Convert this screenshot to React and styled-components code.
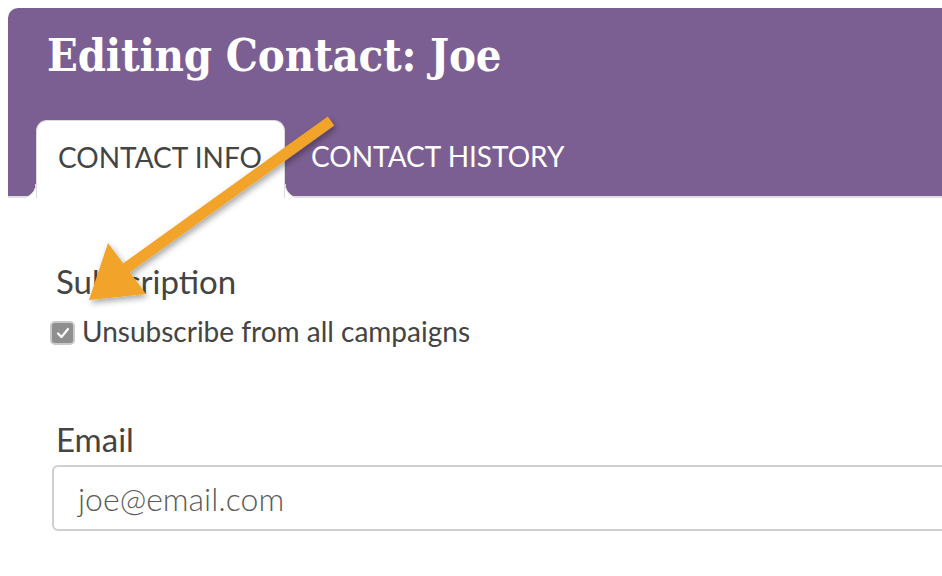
import React from "react";
import styled, { createGlobalStyle } from "styled-components";

const GlobalStyle = createGlobalStyle`
    html, body{
        margin: 0;
        overflow: hidden;
        background: #fff;
    }
    body{
        padding: 8px 0 0 8px;
        font-family: Lato, "Open Sans", sans-serif;
        color: #444;
    }
`

const Page = styled.div`
    position: relative;
    width: 1100px;
`

const Header = styled.header`
    background: #7c5f92;
    border-top-left-radius: 10px;
    border-bottom: 2px solid #e0e0e0;
    padding: 19px 0 0 39px;
`

const Title = styled.h1`
    margin: 0;
    color: #fff;
    font-family: "DejaVu Serif Condensed", "DejaVu Serif", serif;
    font-weight: 600;
    font-size: 45px;
    line-height: 58px;
    letter-spacing: -0.2px;
`

const Tabs = styled.nav`
    display: flex;
    align-items: flex-end;
    height: 78px;
    margin: 35px 0 -2px -11px;
`

const Tab = styled.div`
    position: relative;
    box-sizing: border-box;
    display: flex;
    align-items: center;
    height: 78px;
    padding: ${(p) => (p.$active ? "0 22px 6px 21px" : "0 0 6px 26px")};
    font-size: 28px;
    color: ${(p) => (p.$active ? "#444" : "#fff")};
    background: ${(p) => (p.$active ? "#fff" : "transparent")};
    border: ${(p) => (p.$active ? "1px solid #dcdcdc" : "none")};
    border-bottom: none;
    border-radius: 11px 11px 0 0;
    ${(p) =>
        p.$active &&
        `
        &::before, &::after{
            content: "";
            position: absolute;
            bottom: 0;
            width: 14px;
            height: 14px;
        }
        &::before{
            left: -15px;
            background: radial-gradient(circle at 0 0, transparent 13px, #dcdcdc 13.5px, #dcdcdc 14px, #fff 14.5px);
        }
        &::after{
            right: -15px;
            background: radial-gradient(circle at 100% 0, transparent 13px, #dcdcdc 13.5px, #dcdcdc 14px, #fff 14.5px);
        }
    `}
`

const Content = styled.main`
    padding: 63px 0 0 48px;
`

const SectionLabel = styled.h3`
    margin: 0;
    font-weight: 400;
    font-size: 33px;
    line-height: 40px;
    color: #444;
`

const CheckRow = styled.label`
    display: flex;
    align-items: center;
    gap: 7px;
    height: 34px;
    margin: 13px 0 0 -6px;
    font-size: 28px;
    color: #444;
`

const CheckBox = styled.span`
    display: flex;
    align-items: center;
    justify-content: center;
    width: 21px;
    height: 20px;
    margin-top: 4px;
    border-radius: 5px;
    background: #8f8f8f;
    border: 2px solid #c9c9c9;
`

const Field = styled.div`
    margin-top: 71px;
`

const Input = styled.div`
    display: flex;
    align-items: center;
    box-sizing: border-box;
    height: 66px;
    margin: 6px 0 0 -4px;
    padding-left: 24px;
    border: 2px solid #cfcfcf;
    border-radius: 6px;
    font-size: 32px;
    font-weight: 300;
    color: #5a5a5a;
`

const Arrow = styled.svg`
    position: absolute;
    left: -8px;
    top: -8px;
    pointer-events: none;
`

const App = () => {
    return (
        <Page>
            <GlobalStyle />
            <Header>
                <Title>Editing Contact: Joe</Title>
                <Tabs>
                    <Tab $active>CONTACT INFO</Tab>
                    <Tab>CONTACT HISTORY</Tab>
                </Tabs>
            </Header>
            <Content>
                <SectionLabel>Subscription</SectionLabel>
                <CheckRow>
                    <CheckBox>
                        <svg width="14" height="12" viewBox="0 0 14 12">
                            <path d="M2 6.5 L5.5 10 L12 2" fill="none" stroke="#fff" strokeWidth="2.2" strokeLinecap="round" strokeLinejoin="round" />
                        </svg>
                    </CheckBox>
                    Unsubscribe from all campaigns
                </CheckRow>
                <Field>
                    <SectionLabel>Email</SectionLabel>
                    <Input>joe@email.com</Input>
                </Field>
            </Content>
            {/* orange callout arrow */}
            <Arrow width="942" height="576" viewBox="0 0 942 576">
                <defs>
                    <filter id="shadow" x="-20%" y="-20%" width="140%" height="140%">
                        <feDropShadow dx="2" dy="3" stdDeviation="3" floodColor="#000" floodOpacity="0.35" />
                    </filter>
                </defs>
                <g filter="url(#shadow)" fill="#f1a32a">
                    <line x1="331" y1="121" x2="122" y2="271" stroke="#f1a32a" strokeWidth="11" />
                    <polygon points="89,300 108,243 146,294" />
                </g>
            </Arrow>
        </Page>
    )
};

export default App;
